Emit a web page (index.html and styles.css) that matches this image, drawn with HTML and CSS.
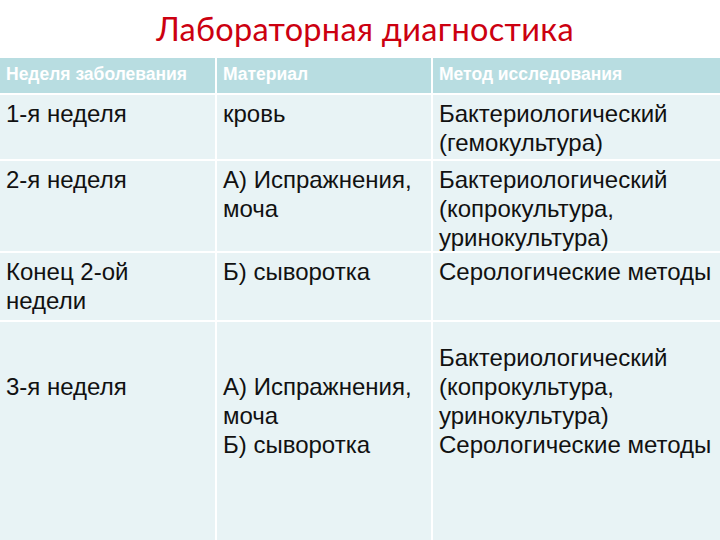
FILE: index.html
```html
<!DOCTYPE html>
<html lang="ru">
<head>
<meta charset="utf-8">
<link rel="stylesheet" href="styles.css">
</head>
<body>
<div class="slide">
  <h1 class="title">Лабораторная диагностика</h1>
  <div class="table">
    <div class="cell head">Неделя заболевания</div>
    <div class="cell head">Материал</div>
    <div class="cell head">Метод исследования</div>

    <div class="cell r1">1-я неделя</div>
    <div class="cell r1">кровь</div>
    <div class="cell r1">Бактериологический<br>(гемокультура)</div>

    <div class="cell r2">2-я неделя</div>
    <div class="cell r2 indent">А) Испражнения,<br>моча</div>
    <div class="cell r2">Бактериологический<br>(копрокультура,<br>уринокультура)</div>

    <div class="cell r3">Конец 2-ой<br>недели</div>
    <div class="cell r3">Б) сыворотка</div>
    <div class="cell r3">Серологические методы</div>

    <div class="cell r4 low">3-я неделя</div>
    <div class="cell r4 low">А) Испражнения,<br>моча<br>Б) сыворотка</div>
    <div class="cell r4 high">Бактериологический<br>(копрокультура,<br>уринокультура)<br>Серологические методы</div>
  </div>
</div>
</body>
</html>
```

FILE: styles.css
```css
html, body {
  margin: 0;
  padding: 0;
  background: #ffffff;
}
.slide {
  width: 720px;
  height: 540px;
  overflow: hidden;
  display: flex;
  flex-direction: column;
}
.title {
  margin: 0;
  height: 56px;
  display: flex;
  align-items: center;
  justify-content: center;
  padding-left: 10px;
  padding-bottom: 2px;
  font-family: Lato, "Open Sans", sans-serif;
  font-weight: normal;
  font-size: 32.5px;
  color: #cc0010;
  letter-spacing: 0.3px;
}
.table {
  flex: 1;
  display: grid;
  grid-template-columns: 215px 214px 287px;
  grid-template-rows: 35px 64px 90px 67px 1fr;
  gap: 2px;
  background: #ffffff;
}
.cell {
  background: #e8f3f5;
  font-family: "Liberation Sans", Arial, sans-serif;
  font-size: 24px;
  line-height: 29px;
  color: #111111;
  padding: 4px 2px 0 6px;
  white-space: nowrap;
}
.head {
  background: #b8dde1;
  color: #ffffff;
  font-weight: bold;
  font-size: 17.5px;
  line-height: 31px;
  padding-top: 1px;
}
.r4.high { padding-top: 21px; }
.r4.low { padding-top: 50px; }
```
